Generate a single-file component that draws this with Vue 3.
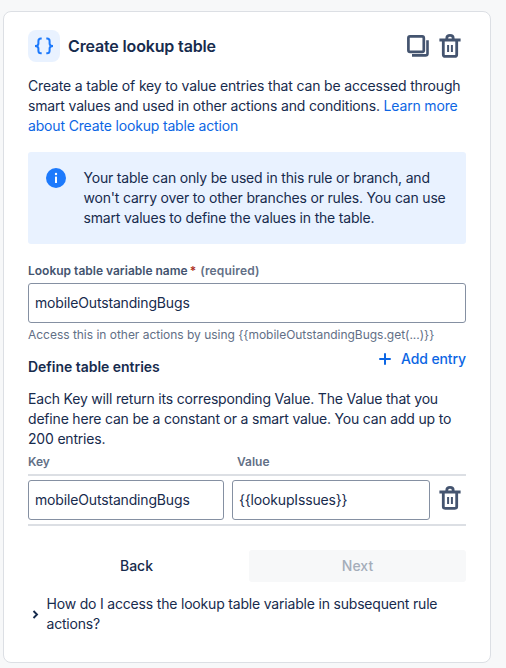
<template>
    <section class="card">
        <header class="header">
            <span class="action-icon">
                <svg width="22" height="18" viewBox="0 0 22 18" fill="none" stroke="#1d7afc" stroke-width="2">
                    <path d="M8.7 1.4H7.9Q5.4 1.4 5.4 3.9V6.4Q5.4 8.9 2 8.9Q5.4 8.9 5.4 11.4V13.7Q5.4 16.2 7.9 16.2H8.7" />
                    <path d="M13.3 1.4H14.1Q16.6 1.4 16.6 3.9V6.4Q16.6 8.9 20 8.9Q16.6 8.9 16.6 11.4V13.7Q16.6 16.2 14.1 16.2H13.3" />
                </svg>
            </span>
            <h2 class="title">Create lookup table</h2>
            <button class="icon-btn" type="button" aria-label="Duplicate">
                <svg width="22" height="22" viewBox="0 0 22 22" fill="none" stroke="#44546f">
                    <rect x="1.4" y="1.4" width="15.4" height="15.4" rx="1.6" stroke-width="2.7" />
                    <path d="M20.5 5.2V18.4Q20.5 20.4 18.5 20.4H5" stroke-width="2.6" />
                </svg>
            </button>
            <button class="icon-btn" type="button" aria-label="Delete">
                <svg class="trash" width="22" height="24" viewBox="0 0 22 24">
                    <path :d="trashPath" />
                    <path class="bars" d="M9.1 11V18M12.9 11V18" />
                </svg>
            </button>
        </header>

        <p class="text intro">
            Create a table of key to value entries that can be accessed through<br />
            smart values and used in other actions and conditions. <a>Learn more</a><br />
            <a>about Create lookup table action</a>
        </p>

        <div class="info">
            <svg width="20" height="20" viewBox="0 0 20 20">
                <circle cx="10" cy="10" r="10" fill="#1d7afc" />
                <circle cx="10" cy="6" r="1.2" fill="#fff" />
                <rect x="9" y="8.5" width="2" height="6.5" rx="0.6" fill="#fff" />
            </svg>
            <p class="text">
                Your table can only be used in this rule or branch, and<br />
                won't carry over to other branches or rules. You can use<br />
                smart values to define the values in the table.
            </p>
        </div>

        <label class="label" for="variable">
            Lookup table variable name<span class="req">*</span><span class="hint">(required)</span>
        </label>
        <input id="variable" v-model="variableName" class="input" />
        <p class="helper">{{ helper }}</p>

        <div class="entries-head">
            <h3 class="subtitle">Define table entries</h3>
            <button class="add" type="button" @click="addEntry">
                <svg width="12" height="12" viewBox="0 0 12 12" stroke="#0c66e4" stroke-width="2" stroke-linecap="round">
                    <path d="M6 1V11M1 6H11" />
                </svg>
                <span>Add entry</span>
            </button>
        </div>

        <p class="text">
            Each Key will return its corresponding Value. The Value that you<br />
            define here can be a constant or a smart value. You can add up to<br />
            200 entries.
        </p>

        <div class="row columns">
            <span>Key</span>
            <span class="value-col">Value</span>
        </div>
        <div class="table">
            <div v-for="(entry, i) in entries" :key="i" class="row">
                <input v-model="entry.key" class="input" />
                <input v-model="entry.value" class="input" />
                <button class="icon-btn" type="button" aria-label="Delete entry" @click="entries.splice(i, 1)">
                    <svg class="trash" width="22" height="24" viewBox="0 0 22 24">
                        <path :d="trashPath" />
                        <path class="bars" d="M9.1 11V18M12.9 11V18" />
                    </svg>
                </button>
            </div>
        </div>

        <div class="actions">
            <button class="btn" type="button">Back</button>
            <button class="btn next" type="button" disabled>Next</button>
        </div>

        <div class="faq">
            <svg width="7" height="9" viewBox="0 0 7 9" fill="none" stroke="#172b4d" stroke-width="1.9">
                <path d="M1.5 1L5 4.5L1.5 8" />
            </svg>
            <p class="text">
                How do I access the lookup table variable in subsequent rule<br />
                actions?
            </p>
        </div>
    </section>
</template>

<script setup>
import { ref } from 'vue';

const variableName = ref('mobileOutstandingBugs');
const helper = 'Access this in other actions by using {{mobileOutstandingBugs.get(...)}}';

const entries = ref([
    { key: 'mobileOutstandingBugs', value: '{{lookupIssues}}' },
]);

const trashPath =
    'M0.4 6H21.6M7.8 6V4.2Q7.8 1.4 11 1.4Q14.2 1.4 14.2 4.2V6M4.3 6V20.4Q4.3 22.4 6.3 22.4H15.7Q17.7 22.4 17.7 20.4V6';

const addEntry = () => entries.value.push({ key: '', value: '' });
</script>

<style>
body {
    background: #f7f8f9;
}
</style>

<style scoped>
.card {
    box-sizing: border-box;
    width: 488px;
    height: 652px;
    margin: 11px 0 0 3px;
    padding: 18px 24px 0;
    border: 1px solid #dcdfe4;
    border-radius: 8px;
    background: #fff;
    color: #172b4d;
    font-family: Inter, 'Liberation Sans', sans-serif;
    font-size: 14px;
    line-height: 20px;
    white-space: nowrap;
}

h2,
h3,
p {
    margin: 0;
}

button {
    padding: 0;
    border: 0;
    background: none;
    font: inherit;
    color: inherit;
}

svg {
    display: block;
    flex: none;
}

a {
    color: #0c66e4;
}

.text {
    letter-spacing: -0.19px;
}

.header {
    display: flex;
    align-items: center;
    height: 32px;
}

.action-icon {
    display: flex;
    align-items: center;
    justify-content: center;
    width: 32px;
    height: 32px;
    margin-right: 8px;
    border-radius: 8px;
    background: #e9f2ff;
}

.title {
    flex: 1;
    font-size: 16px;
    font-weight: 600;
    letter-spacing: -0.15px;
}

.icon-btn {
    display: flex;
    margin-right: 5px;
}

.icon-btn + .icon-btn {
    margin-left: 5px;
}

.trash {
    fill: none;
    stroke: #44546f;
    stroke-width: 2.8;
}

.bars {
    stroke-width: 2;
}

.intro {
    margin-top: 14px;
    letter-spacing: -0.165px;
}

.info {
    display: flex;
    gap: 17.5px;
    margin-top: 16px;
    padding: 16px 18px;
    border-radius: 3px;
    background: #e9f2ff;
}

.label {
    display: flex;
    margin-top: 19px;
    font-size: 12px;
    font-weight: 600;
    line-height: 16px;
    color: #44546f;
}

.req {
    margin: 0 4px 0 2px;
    color: #ae2e24;
}

.hint {
    font-weight: 600;
    letter-spacing: 0.15px;
    color: #626f86;
}

.input {
    box-sizing: border-box;
    display: block;
    width: 100%;
    min-width: 0;
    height: 40px;
    margin: 0;
    padding: 0 6px 2px;
    border: 1px solid #8590a2;
    border-radius: 3px;
    outline: none;
    background: #fff;
    color: #172b4d;
    font: inherit;
    letter-spacing: -0.16px;
}

.label + .input {
    margin-top: 4px;
}

.helper {
    margin-top: 4px;
    font-size: 12px;
    line-height: 16px;
    letter-spacing: -0.02px;
    color: #626f86;
}

.entries-head {
    display: flex;
    justify-content: space-between;
    height: 40px;
    margin-top: 6px;
}

.subtitle {
    margin-top: 8px;
    font-size: 14px;
    font-weight: 600;
    letter-spacing: -0.03px;
}

.add {
    display: flex;
    align-items: center;
    gap: 10px;
    height: 20px;
    font-weight: 500;
    letter-spacing: -0.1px;
    color: #0c66e4;
}

.row {
    display: grid;
    grid-template-columns: 196px 198px 22px;
    align-items: center;
    gap: 8px;
}

.row .icon-btn {
    margin: -4px 0 0 1px;
}

.columns {
    height: 25px;
    font-size: 12px;
    font-weight: 600;
    line-height: 25px;
    color: #626f86;
}

.value-col {
    padding-left: 5px;
}

.table {
    padding: 4px 0;
    border: solid #dcdfe4;
    border-width: 2px 0;
}

.actions {
    display: grid;
    grid-template-columns: 1fr 1fr;
    gap: 4px;
    margin-top: 24px;
}

.btn {
    height: 32px;
    border-radius: 3px;
    font-weight: 500;
}

.next {
    background: #f7f8f9;
    color: #a5adba;
}

.faq {
    display: flex;
    align-items: center;
    gap: 7.5px;
    margin-top: 12px;
    padding-left: 4px;
}
</style>
